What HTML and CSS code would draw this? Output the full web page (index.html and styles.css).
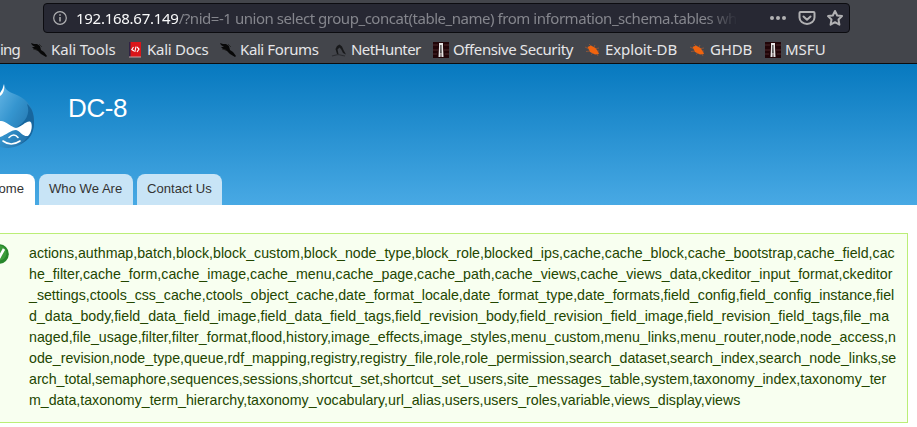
FILE: index.html
```html
<!DOCTYPE html>
<html lang="en">
<head>
<meta charset="utf-8">
<title>DC-8</title>
<link rel="stylesheet" href="styles.css">
</head>
<body>
<svg class="defs" width="0" height="0" aria-hidden="true">
  <symbol id="kali" viewBox="0 0 16 16"><path d="M0 1L3 2L6 2L9 4L10 8L13 10L16 14L15 15L10 12L7 9L3 7L1 5L4 5L1 3Z" fill="#080808"/><path d="M8 2l3 3M2 7l4 1" stroke="#222" stroke-width=".8"/></symbol>
  <symbol id="docs" viewBox="0 0 16 16"><path d="M2 0h12v15H2z" fill="#da1519"/><path d="M2 0h1.500v15H2z" fill="#302345"/><path d="M2 14.500h12v1H2z" fill="#c9a5a5"/><path d="M6.500 5L4.800 7.500L7 9M10 5l2 2l-2 3M9 4.500L7.800 10" fill="none" stroke="#fff" stroke-width="1.100"/></symbol>
  <symbol id="hunter" viewBox="0 0 16 16"><path d="M1 14L7 12.500L14 14" fill="none" stroke="#2b2c30" stroke-width="1.200"/><path d="M6 12L4.500 7L6 4L8.500 2.500L11 4.500L12.500 8L15 12.500L12 11L10 7L8.500 5.500L6.500 7.500L7.500 12Z" fill="#18191b"/></symbol>
  <symbol id="offsec" viewBox="0 0 16 16"><path d="M0 0h16v16H0z" fill="#210508"/><path d="M0 3h5m6 0h5M0 8h5m6 0h5M0 12h4m8 0h4" stroke="#4c282a" stroke-width="1"/><path d="M6 1h4v4l.5 10h-2L8 6L7.500 15H5.500L6 5z" fill="#e8e5e5"/><path d="M7.400 3h1v8h-1z" fill="#111"/></symbol>
  <symbol id="bug" viewBox="0 0 16 16"><path d="M2.500 5L6 3.500L10.500 6L13 9.500L14 12L10 12.500L5 10Z" fill="#f0640f"/><path d="M3 6.500L0 5M5 9L1 9.500M6 4L4 2M9 5l1-2M11 6.500l3-.5M12 9l2 0M8 11l-2 1.500M12 12l1 2" stroke="#a85a32" stroke-width=".7"/></symbol>
</svg>
<div class="chrome">
  <div class="urlbar">
    <svg class="info" viewBox="0 0 14 14"><circle cx="7" cy="7" r="6.300" fill="none" stroke="#b1b1b3" stroke-width="1.200"/><path d="M7 6v4.500M7 3.300v1.500" stroke="#b1b1b3" stroke-width="1.500"/></svg>
    <div class="url"><span class="host">192.168.67.149</span><span class="path">/?nid=-1 union select group_concat(table_name) from information_schema.tables wh</span></div>
    <svg class="actions" viewBox="0 0 72 18" fill="none" stroke="#b1b1b3" stroke-width="2"><g fill="#b1b1b3" stroke="none"><circle cx="3" cy="9" r="2"/><circle cx="9" cy="9" r="2"/><circle cx="15" cy="9" r="2"/></g><path d="M31.500 3h13q1 0 1 1v4.500a7.500 6.500 0 0 1-15 0V4q0-1 1-1zM34.500 7.500l3.500 3.200l3.500-3.200" stroke-linecap="round" stroke-linejoin="round"/><path d="M66 2L68.200 6.500L73 7.100L69.500 10.500L70.400 15.700L66 13.200L61.600 15.700L62.500 10.500L59 7.100L63.800 6.500Z" stroke-linejoin="round"/></svg>
  </div>
  <div class="bookmarks">
    <div class="mark training"><span>ing</span></div>
    <div class="mark tools"><svg><use href="#kali"/></svg><span>Kali Tools</span></div>
    <div class="mark docs"><svg><use href="#docs"/></svg><span>Kali Docs</span></div>
    <div class="mark forums"><svg><use href="#kali"/></svg><span>Kali Forums</span></div>
    <div class="mark hunter"><svg><use href="#hunter"/></svg><span>NetHunter</span></div>
    <div class="mark offsec"><svg><use href="#offsec"/></svg><span>Offensive Security</span></div>
    <div class="mark exploit"><svg><use href="#bug"/></svg><span>Exploit-DB</span></div>
    <div class="mark ghdb"><svg><use href="#bug"/></svg><span>GHDB</span></div>
    <div class="mark msfu"><svg><use href="#offsec"/></svg><span>MSFU</span></div>
  </div>
</div>
<header>
  <div class="brand">
    <svg class="logo" viewBox="0 0 36 68"><defs><linearGradient id="drop" x1="0" y1="0" x2="1" y2="1"><stop offset="0" stop-color="#65b5e5"/><stop offset=".4" stop-color="#3595cf"/><stop offset="1" stop-color="#1c679f"/></linearGradient></defs><path d="M4 1C5 8 10 9 18 12.500C28 17 34 26 34 39C34 55 21 65 6 65L0 64V12C3 9 4 5 4 1Z" fill="url(#drop)"/><path d="M27 21C31 31 25 39 17 44C23 43 28 38 32 39C32 49 28 57 18 62C31 57 34 49 34 39C34 31 32 25 27 21Z" fill="#17669e"/><path d="M4 1C5 7 3 11 0 13V10Q3 6 4 1Z" fill="#fff"/><path d="M0 38C5 37 11 44 16 45C22 44 25 38 30 38.500C33 40 32 50 28 53C23 54 20 48 16 47C11 47 6 52 0 54Z" fill="#fff"/><path d="M9 54.500Q14 49.500 18 54.500M3 58Q11 64 20 58" fill="none" stroke="#fff" stroke-width="1.600" stroke-linecap="round"/></svg>
    <h1>DC-8</h1>
  </div>
  <nav><a class="home"><span>ome</span></a><a class="who"><span>Who We Are</span></a><a class="contact"><span>Contact Us</span></a></nav>
</header>
<main>
  <div class="status">
    <svg class="ok" viewBox="0 0 10 20"><circle cx="-1" cy="10" r="9.800" fill="#27872b"/><circle cx="-1" cy="9" r="7.500" fill="#3d9c3b"/><path d="M-4 10l3 4L4 5" fill="none" stroke="#fff" stroke-width="2.600"/></svg>
    <div class="tables">
      <div class="l1">actions,authmap,batch,block,block_custom,block_node_type,block_role,blocked_ips,cache,cache_block,cache_bootstrap,cache_field,cac</div>
      <div class="l2">he_filter,cache_form,cache_image,cache_menu,cache_page,cache_path,cache_views,cache_views_data,ckeditor_input_format,ckeditor</div>
      <div class="l3">_settings,ctools_css_cache,ctools_object_cache,date_format_locale,date_format_type,date_formats,field_config,field_config_instance,fiel</div>
      <div class="l4">d_data_body,field_data_field_image,field_data_field_tags,field_revision_body,field_revision_field_image,field_revision_field_tags,file_ma</div>
      <div class="l5">naged,file_usage,filter,filter_format,flood,history,image_effects,image_styles,menu_custom,menu_links,menu_router,node,node_access,n</div>
      <div class="l6">ode_revision,node_type,queue,rdf_mapping,registry,registry_file,role,role_permission,search_dataset,search_index,search_node_links,se</div>
      <div class="l7">arch_total,semaphore,sequences,sessions,shortcut_set,shortcut_set_users,site_messages_table,system,taxonomy_index,taxonomy_ter</div>
      <div class="l8">m_data,taxonomy_term_hierarchy,taxonomy_vocabulary,url_alias,users,users_roles,variable,views_display,views</div>
    </div>
  </div>
</main>
</body>
</html>
```
FILE: styles.css
```css
* { box-sizing: border-box; }
body { margin: 0; height: 427px; overflow: hidden; background: #fff; font-family: "Liberation Sans", sans-serif; }
.defs { display: block; }
.chrome { height: 64px; padding-top: 3px; background: #43454b; border-bottom: 1px solid #0c0c0d; font-family: "Noto Sans", sans-serif; }
.urlbar { display: flex; align-items: center; width: 807px; height: 30px; margin-left: 43px; padding-left: 9px; background: #272833; border: 1px solid #0c0c10; border-radius: 4px; }
.info { width: 14px; height: 14px; margin-right: 9px; flex: none; }
.url { width: 662px; white-space: pre; font-size: 15px; line-height: 26px; color: #85868d; mask-image: linear-gradient(to right, #000 630px, transparent 662px); }
.host { color: #f9f9fa; letter-spacing: -.27px; }
.path { letter-spacing: -.46px; }
.actions { width: 72px; height: 18px; margin-left: 31px; flex: none; overflow: visible; }
.bookmarks { display: flex; height: 30px; align-items: center; padding-top: 3px; font-size: 15px; line-height: 22px; color: #e6e6e8; }
.mark { display: flex; align-items: center; gap: 4px; flex: none; white-space: nowrap; }
.mark svg { width: 16px; height: 16px; flex: none; }
.mark span { margin-top: -2px; }
.training { width: 31px; letter-spacing: -.8px; }
.tools { width: 96px; letter-spacing: -.14px; }
.docs { width: 93px; letter-spacing: -.27px; }
.forums { width: 111px; letter-spacing: -.4px; }
.hunter { width: 102px; letter-spacing: -.6px; }
.offsec { width: 152px; letter-spacing: -.4px; }
.exploit { width: 105px; letter-spacing: -.12px; }
.ghdb { width: 75px; letter-spacing: -.2px; }
.msfu { width: 80px; }
header { display: flex; flex-direction: column; justify-content: space-between; height: 141px; background: linear-gradient(#0779bf, #48a9e4); }
.brand { display: flex; padding-top: 19px; }
.logo { width: 36px; height: 68px; }
h1 { margin: 10px 0 0 32px; font-size: 26px; line-height: 30px; font-weight: 400; letter-spacing: -.4px; color: #fff; }
nav { display: flex; gap: 4px; height: 31px; font-size: 13.1px; line-height: 29px; color: #333; }
nav a { border-radius: 8px 8px 0 0; background: #c8e4f6; padding-left: 10px; white-space: nowrap; }
.home { display: flex; justify-content: flex-end; width: 35px; padding: 0 11px 0 0; background: #fff; border-top-left-radius: 0; }
.who { width: 94px; }
.contact { width: 85px; }
main { padding-top: 28px; }
.status { display: flex; width: 908px; height: 190px; padding-top: 9px; background: #f8fff0; border: 1px solid #be7; border-left: 0; color: #234600; }
.ok { width: 10px; height: 20px; margin: 1px 19px 0 0; flex: none; }
.tables { font-size: 14.2px; line-height: 21px; white-space: nowrap; }
.l1 { letter-spacing: .01px; }
.l2 { letter-spacing: .03px; }
.l4 { letter-spacing: .018px; }
.l5 { letter-spacing: .035px; }
.l6 { letter-spacing: .018px; }
```
